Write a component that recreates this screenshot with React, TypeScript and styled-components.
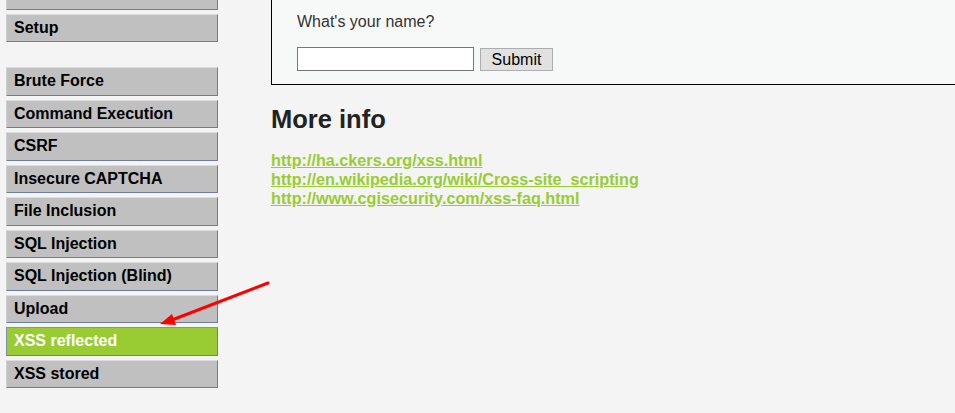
import React from "react";
import styled, { createGlobalStyle } from "styled-components";

const GlobalStyle = createGlobalStyle`
  html, body {
    margin: 0;
    padding: 0;
    background: #f4f4f4;
    font-family: "Liberation Sans", Arial, sans-serif;
    overflow: hidden;
  }
  #root { position: relative; }
`;

const Page = styled.div`
  display: flex;
  align-items: flex-start;
  margin-top: -19px;
  padding-left: 6px;
`;

const Sidebar = styled.nav`
  width: 212px;
  flex: none;
`;

const MenuGroup = styled.ul`
  list-style: none;
  margin: 0 0 25px 0;
  padding: 0;
`;

const MenuItem = styled.li<{ $selected?: boolean }>`
  box-sizing: border-box;
  height: 28.5px;
  margin-bottom: 4px;
  display: flex;
  align-items: center;
  padding-left: 7px;
  font-size: 16px;
  font-weight: bold;
  color: ${(p) => (p.$selected ? "#ffffff" : "#000000")};
  background: ${(p) => (p.$selected ? "#99cc33" : "#c0c0c0")};
  border: 1px solid;
  border-color: ${(p) =>
    p.$selected
      ? "#8090b0 #6e7d9c #6e7d9c #8090b0"
      : "#dcdcdc #6e7d9c #6e7d9c #d0d0d0"};
`;

const Main = styled.main`
  flex: 1;
  margin-left: 53px;
  min-width: 0;
`;

const Box = styled.div`
  background: #f7f9f8;
  border: 1px solid #000;
  border-right: none;
  padding: 31px 0 13px 25px;
`;

const Question = styled.p`
  margin: 0 0 16px 0;
  font-size: 16px;
  line-height: 18px;
  color: #333;
`;

const Form = styled.form`
  display: flex;
  align-items: flex-end;
  gap: 6px;
`;

const TextInput = styled.input`
  box-sizing: border-box;
  width: 177px;
  height: 24px;
  border: 1px solid #767676;
  background: #fff;
  padding: 0 3px;
  margin: 0;
  font-family: "Liberation Sans", Arial, sans-serif;
  font-size: 13px;
`;

const SubmitButton = styled.button`
  box-sizing: border-box;
  width: 73px;
  height: 23px;
  border: 1px solid #adadad;
  background: #e1e1e1;
  margin: 0;
  padding: 0;
  font-family: "Liberation Sans", Arial, sans-serif;
  font-size: 16px;
  color: #000;
`;

const Heading = styled.h2`
  margin: 20px 0 0 0;
  font-size: 25.5px;
  line-height: 28px;
  font-weight: bold;
  color: #222;
`;

const Links = styled.div`
  margin-top: 18px;
  display: flex;
  flex-direction: column;
`;

const InfoLink = styled.a`
  font-size: 16.2px;
  line-height: 19px;
  font-weight: bold;
  color: #99cc33;
  text-decoration: underline;
  align-self: flex-start;
`;

const Annotation = styled.svg`
  position: absolute;
  left: 0;
  top: 0;
  pointer-events: none;
`;

const groups: string[][] = [
  ["Instructions", "Setup"],
  [
    "Brute Force",
    "Command Execution",
    "CSRF",
    "Insecure CAPTCHA",
    "File Inclusion",
    "SQL Injection",
    "SQL Injection (Blind)",
    "Upload",
    "XSS reflected",
    "XSS stored",
  ],
];

const links = [
  "http://ha.ckers.org/xss.html",
  "http://en.wikipedia.org/wiki/Cross-site_scripting",
  "http://www.cgisecurity.com/xss-faq.html",
];

export default function App() {
  return (
    <>
      <GlobalStyle />
      <Page>
        <Sidebar>
          {groups.map((g, i) => (
            <MenuGroup key={i}>
              {g.map((item) => (
                <MenuItem key={item} $selected={item === "XSS reflected"}>
                  {item}
                </MenuItem>
              ))}
            </MenuGroup>
          ))}
        </Sidebar>
        <Main>
          <Box>
            <Question>What's your name?</Question>
            <Form onSubmit={(e) => e.preventDefault()}>
              <TextInput type="text" name="name" />
              <SubmitButton type="submit">Submit</SubmitButton>
            </Form>
          </Box>
          <Heading>More info</Heading>
          <Links>
            {links.map((l) => (
              <InfoLink key={l} href={l}>
                {l}
              </InfoLink>
            ))}
          </Links>
        </Main>
      </Page>
      <Annotation width="955" height="413" viewBox="0 0 955 413">
        <line
          x1="268"
          y1="302"
          x2="172"
          y2="339"
          stroke="#ff0000"
          strokeWidth="3"
          strokeLinecap="round"
        />
        <polygon points="160,343 172,333 176,344" fill="#ff0000" />
      </Annotation>
    </>
  );
}
